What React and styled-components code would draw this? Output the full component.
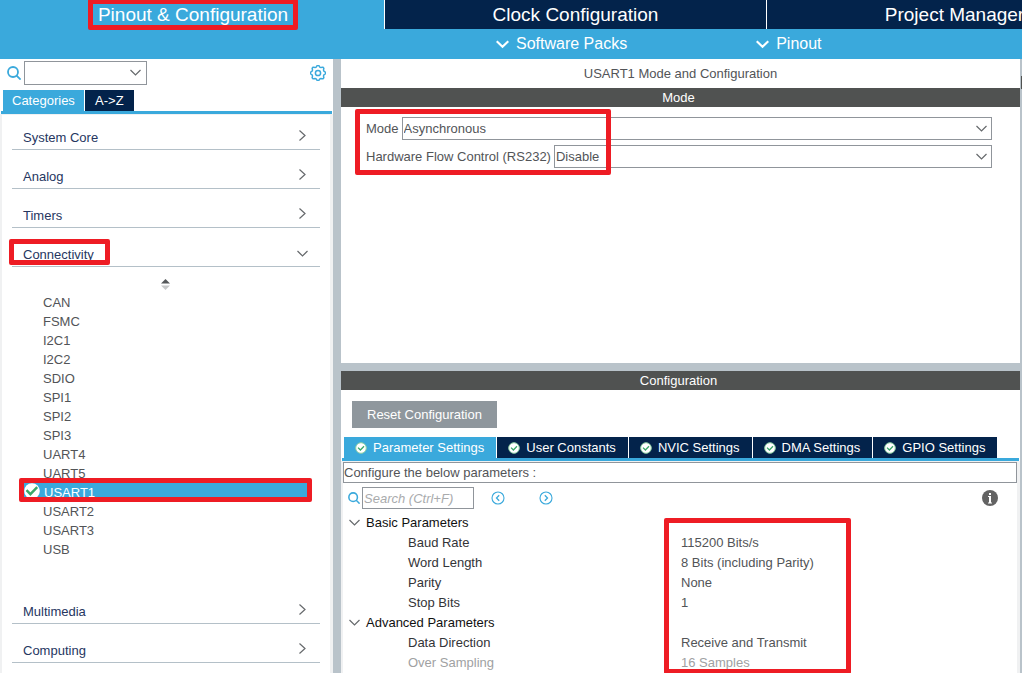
import React from "react";
import styled, { createGlobalStyle, css } from "styled-components";

const color = {
  sky: "#3aa9dc",
  navy: "#03234b",
  splitter: "#b9c3ca",
  bar: "#505251",
  line: "#b4c0c8",
  field: "#90959b",
  text: "#525457",
  category: "#26365f",
  edge: "#f0f1f2",
  mark: "#ee1c24",
};

const GlobalStyle = createGlobalStyle`
  *, *::before, *::after { box-sizing: border-box; }
  body {
    margin: 0;
    overflow: hidden;
    font-family: "Liberation Sans", Arial, sans-serif;
    font-size: 13px;
    color: ${color.text};
    background: #fff;
  }
  button, input, select { font: inherit; color: inherit; margin: 0; border-radius: 0; }
  button { border: 0; padding: 0; background: none; cursor: pointer; }
  ul { list-style: none; margin: 0; padding: 0; }
  svg { display: block; flex: none; }
`;

const Page = styled.div`
  display: flex;
  flex-direction: column;
  height: 100vh;
  overflow: hidden;
`;

/* Red annotation frame laid over the part it points out */
const Mark = styled.span`
  position: absolute;
  z-index: 2;
  border: 5px solid ${color.mark};
  border-radius: 2px;
  pointer-events: none;
  left: ${(p) => p.$x}px;
  top: ${(p) => p.$y}px;
  width: ${(p) => p.$w}px;
  height: ${(p) => p.$h}px;
`;

const Header = styled.header`
  flex: none;
  background: ${color.sky};
  color: #fff;
`;

const MainTabs = styled.nav`
  display: flex;
  position: relative;
  height: 29px;
  padding-left: 2px;
`;

const MainTab = styled.button`
  flex: 1 0 ${(p) => (p.$last ? 376 : 382)}px;
  font-size: 19px;
  line-height: 29px;
  ${(p) =>
    !p.$active &&
    css`
      background: ${color.navy};
      border-left: 1px solid #fff;
    `}
`;

const SubBar = styled.div`
  display: flex;
  align-items: center;
  gap: 129px;
  height: 30px;
  padding-left: 496px;
`;

const SubMenu = styled.button`
  display: flex;
  align-items: center;
  gap: 7px;
  font-size: 16px;
`;

const Body = styled.div`
  display: flex;
  flex: 1;
  min-height: 0;
`;

const Sidebar = styled.aside`
  display: flex;
  flex-direction: column;
  flex: none;
  width: 333px;
`;

const SearchRow = styled.div`
  display: flex;
  align-items: center;
  height: 27px;
  margin-bottom: 4px;
  padding: 0 7px;
  gap: 3px;
`;

const IconButton = styled.button`
  display: flex;
  margin-left: ${(p) => (p.$push ? "auto" : "0")};
`;

const SelectBox = styled.div`
  display: flex;
  align-items: center;
  position: relative;
  height: ${(p) => p.$height || 23}px;
  ${(p) => (p.$width ? `width: ${p.$width}px;` : "flex: 1;")}
  svg {
    position: absolute;
    right: ${(p) => p.$inset || 5}px;
    pointer-events: none;
  }
`;

const Select = styled.select`
  appearance: none;
  width: 100%;
  height: 100%;
  padding: 0 1px;
  border: 1px solid ${color.field};
  background: #fff;
`;

const SideTabs = styled.div`
  display: flex;
  gap: 1px;
  padding-left: 3px;
`;

const SideTab = styled.button`
  height: 21px;
  min-width: 49px;
  padding: 0 9px;
  color: #fff;
  background: ${(p) => (p.$active ? color.sky : color.navy)};
`;

const Rule = styled.div`
  flex: none;
  height: 3px;
  margin: 0 ${(p) => p.$inset || 1}px;
  background: ${color.sky};
`;

const Categories = styled.div`
  display: flex;
  flex: 1;
  flex-direction: column;
  gap: 15px;
  padding: 11px 10px 0;
  border: solid ${color.edge};
  border-width: 1px 3px 0 2px;
`;

const CategoryRow = styled.button`
  display: flex;
  flex: none;
  justify-content: space-between;
  position: relative;
  width: 100%;
  height: 24px;
  padding: 0 12px 0 11px;
  border-bottom: 1px solid ${color.line};
  color: ${color.category};
  line-height: 24px;
`;

const Group = styled.section`
  flex: none;
`;

const Sorter = styled.button`
  display: flex;
  justify-content: center;
  width: 100%;
  height: 26px;
  padding: 12px 1px 0 0;
`;

const Peripherals = styled.ul`
  position: relative;
  padding-bottom: 26px !important;
`;

const Peripheral = styled.li`
  display: flex;
  align-items: flex-start;
  gap: 4px;
  height: 19px;
  margin: 0 12px;
  padding-left: ${(p) => (p.$active ? 0 : 19)}px;
  line-height: 19px;
  color: ${(p) => (p.$active ? "#fff" : color.text)};
  background: ${(p) => (p.$active ? color.sky : "transparent")};
`;

const Splitter = styled.div`
  flex: 0 0 8px;
  background: ${color.splitter};
`;

const Main = styled.main`
  display: flex;
  flex: 1;
  flex-direction: column;
  min-width: 0;
`;

const ScrollEdge = styled.div`
  display: flex;
  justify-content: flex-end;
  flex: 0 0 2px;
  padding-top: 17px;
  background: ${color.splitter};
`;

const ScrollThumb = styled.div`
  width: 1px;
  height: 13px;
  background: ${color.bar};
`;

const Title = styled.h1`
  margin: 0;
  text-align: center;
  font-size: 13px;
  font-weight: 400;
  line-height: 29px;
`;

const Bar = styled.h2`
  flex: none;
  margin: 0;
  padding-right: 4px;
  text-align: center;
  font-size: 13px;
  font-weight: 400;
  line-height: 19px;
  color: #fff;
  background: ${color.bar};
`;

const ModePanel = styled.section`
  flex: 0 0 304px;
`;

const ModeForm = styled.div`
  display: flex;
  flex-direction: column;
  gap: 5px;
  position: relative;
  padding: 10px 28px 0 25px;
`;

const Field = styled.div`
  display: flex;
  align-items: center;
  gap: 3px;
`;

const ConfigPanel = styled.section`
  display: flex;
  flex: 1;
  flex-direction: column;
  min-height: 0;
`;

const ResetButton = styled.button`
  align-self: flex-start;
  flex: none;
  height: 27px;
  margin: 11px 11px 9px;
  padding: 0 15px;
  color: #fff;
  background: #8f979d;
`;

const ConfigTabs = styled.div`
  display: flex;
  flex: none;
  gap: 1px;
  padding-left: 3px;
`;

const ConfigTab = styled.button`
  display: flex;
  align-items: center;
  gap: 6px;
  height: 21px;
  padding: 0 12px 0 11px;
  color: #fff;
  background: ${(p) => (p.$active ? color.sky : color.navy)};
`;

const Settings = styled.div`
  flex: 1;
  min-height: 0;
  border: solid ${color.edge};
  border-width: 1px 3px 0 2px;
`;

const Hint = styled.p`
  margin: 0;
  height: 21px;
  border: 1px solid ${color.field};
  line-height: 19px;
`;

const FindRow = styled.div`
  display: flex;
  align-items: center;
  height: 29px;
  padding: 4px 19px 3px 5px;
`;

const FindInput = styled.input`
  width: 112px;
  height: 22px;
  margin: 0 17px 0 2px;
  padding: 0 1px;
  border: 1px solid ${color.field};
  &::placeholder { color: #a9abad; font-style: italic; }
`;

const Steps = styled.div`
  display: flex;
  gap: 34px;
`;

const TableBox = styled.div`
  position: relative;
`;

const Table = styled.table`
  width: 100%;
  table-layout: fixed;
  border-collapse: collapse;
  th, td { height: 20px; padding: 0; line-height: 19px; text-align: left; font-weight: 400; }
`;

const NameCol = styled.col`
  width: 338px;
`;

const GroupToggle = styled.button`
  display: flex;
  align-items: center;
  gap: 6px;
  padding-left: 6px;
  color: #111;
`;

const ParamRow = styled.tr`
  color: ${(p) => (p.$off ? "#a0a1a2" : color.text)};
  && th { padding-left: 65px; color: ${(p) => (p.$off ? "#a0a1a2" : "#333437")}; }
`;

const chevronStroke = "#66696c";

const Chevron = ({ right }) => (
  <svg width="11" height={right ? 19 : 11} viewBox={right ? "0 -4 11 19" : "0 0 11 11"} fill="none" stroke={chevronStroke} strokeWidth="1.2">
    <path d={right ? "M2.5 0.5 8 5.5 2.5 10.5" : "M0.5 3 5.5 8 10.5 3"} />
  </svg>
);

const DownInRow = () => (
  <svg width="11" height="19" viewBox="0 0 11 19" fill="none" stroke={chevronStroke} strokeWidth="1.2">
    <path d="M0.5 8 5.5 13 10.5 8" />
  </svg>
);

const WhiteChevron = () => (
  <svg width="13" height="9" viewBox="0 0 13 9" fill="none" stroke="#fff" strokeWidth="2.2">
    <path d="M0.7 1.2 6.5 6.8 12.3 1.2" />
  </svg>
);

const Magnifier = ({ size }) => (
  <svg width={size} height={size} viewBox="0 0 14 14" fill="none" stroke={color.sky} strokeWidth="1.8">
    <circle cx="6" cy="6" r="5" />
    <path d="M9.6 9.6 13.6 13.6" />
  </svg>
);

const gearPath = Array.from({ length: 32 }, (_, i) => {
  const radius = i % 4 < 2 ? 7.6 : 6.2;
  const angle = ((i - 0.5) * Math.PI) / 16;
  return `${i ? "L" : "M"}${(8 + radius * Math.cos(angle)).toFixed(2)} ${(8 + radius * Math.sin(angle)).toFixed(2)}`;
}).join("");

const Gear = () => (
  <svg width="16" height="16" viewBox="0 0 16 16" fill="none" stroke={color.sky} strokeWidth="1.5" strokeLinejoin="round">
    <path d={gearPath + "Z"} />
    <circle cx="8" cy="8" r="2.6" />
  </svg>
);

const SortArrows = () => (
  <svg width="9" height="11" viewBox="0 0 9 11">
    <path d="M4.5 0 9 4.6H0Z" fill="#55585a" />
    <path d="M0 6.5H9L4.5 11Z" fill="#c6c8c9" />
  </svg>
);

const CheckBig = () => (
  <svg width="16" height="16" viewBox="0 0 16 16" fill="none">
    <circle cx="8" cy="8" r="7.8" fill="#fff" />
    <path d="M2.5 7.2 6.4 11.2 13.2 4.2" stroke="#3aa869" strokeWidth="2.4" />
  </svg>
);

const CheckSmall = () => (
  <svg width="12" height="12" viewBox="0 0 12 12" fill="none">
    <circle cx="6" cy="6" r="5.3" fill="#fff" stroke="#8fd0a4" />
    <path d="M3 5.6 5.4 8 9 4.2" stroke="#3aa869" strokeWidth="1.3" />
  </svg>
);

const CircleArrow = ({ next }) => (
  <svg width="14" height="14" viewBox="0 0 14 14" fill="none" stroke={color.sky}>
    <circle cx="7" cy="7" r="6" strokeWidth="1.1" />
    <path d={next ? "M5.8 4.2 8.5 7 5.8 9.8" : "M8.2 4.2 5.5 7 8.2 9.8"} strokeWidth="1.3" />
  </svg>
);

const Info = () => (
  <svg width="16" height="16" viewBox="0 0 16 16">
    <circle cx="8" cy="8" r="8" fill="#636363" />
    <path d="M7 3H9V5H7ZM6 6H9V12.4H10V13.4H6V12.4H7V7H6Z" fill="#fff" />
  </svg>
);

const peripherals = [
  "CAN", "FSMC", "I2C1", "I2C2", "SDIO", "SPI1", "SPI2", "SPI3",
  "UART4", "UART5", "USART1", "USART2", "USART3", "USB",
];

const groups = [
  {
    name: "Basic Parameters",
    rows: [
      ["Baud Rate", "115200 Bits/s"],
      ["Word Length", "8 Bits (including Parity)"],
      ["Parity", "None"],
      ["Stop Bits", "1"],
    ],
  },
  {
    name: "Advanced Parameters",
    rows: [
      ["Data Direction", "Receive and Transmit"],
      ["Over Sampling", "16 Samples", true],
    ],
  },
];

const configTabs = ["Parameter Settings", "User Constants", "NVIC Settings", "DMA Settings", "GPIO Settings"];

const Category = ({ name }) => (
  <CategoryRow>
    {name}
    <Chevron right />
  </CategoryRow>
);

export default function App() {
  return (
    <Page>
      <GlobalStyle />
      <Header>
        <MainTabs>
          <MainTab $active>Pinout &amp; Configuration</MainTab>
          <MainTab>Clock Configuration</MainTab>
          <MainTab $last>Project Manager</MainTab>
          <Mark $x={88} $y={-1} $w={210} $h={31} />
        </MainTabs>
        <SubBar>
          <SubMenu><WhiteChevron />Software Packs</SubMenu>
          <SubMenu><WhiteChevron />Pinout</SubMenu>
        </SubBar>
      </Header>
      <Body>
        <Sidebar>
          <SearchRow>
            <Magnifier size={14} />
            <SelectBox $width={123} $height={24} $inset={6}>
              <Select aria-label="Search peripherals" defaultValue="">
                <option value=""></option>
              </Select>
              <Chevron />
            </SelectBox>
            <IconButton $push aria-label="Settings"><Gear /></IconButton>
          </SearchRow>
          <SideTabs>
            <SideTab $active>Categories</SideTab>
            <SideTab>A-&gt;Z</SideTab>
          </SideTabs>
          <Rule />
          <Categories>
            <Category name="System Core" />
            <Category name="Analog" />
            <Category name="Timers" />
            <Group>
              <CategoryRow aria-expanded="true">
                Connectivity
                <DownInRow />
                <Mark $x={-3} $y={-4} $w={101} $h={26} />
              </CategoryRow>
              <Sorter aria-label="Sort"><SortArrows /></Sorter>
              <Peripherals>
                {peripherals.map((name) => (
                  <Peripheral key={name} $active={name === "USART1"}>
                    {name === "USART1" && <CheckBig />}
                    {name}
                  </Peripheral>
                ))}
                <Mark $x={7} $y={185} $w={293} $h={24} />
              </Peripherals>
            </Group>
            <Category name="Multimedia" />
            <Category name="Computing" />
          </Categories>
        </Sidebar>
        <Splitter />
        <Main>
          <ModePanel>
            <Title>USART1 Mode and Configuration</Title>
            <Bar>Mode</Bar>
            <ModeForm>
              <Field>
                <label htmlFor="mode">Mode</label>
                <SelectBox>
                  <Select id="mode"><option>Asynchronous</option></Select>
                  <Chevron />
                </SelectBox>
              </Field>
              <Field>
                <label htmlFor="flow">Hardware Flow Control (RS232)</label>
                <SelectBox>
                  <Select id="flow"><option>Disable</option></Select>
                  <Chevron />
                </SelectBox>
              </Field>
              <Mark $x={14} $y={2} $w={256} $h={66} />
            </ModeForm>
          </ModePanel>
          <Splitter />
          <ConfigPanel>
            <Bar>Configuration</Bar>
            <ResetButton>Reset Configuration</ResetButton>
            <ConfigTabs>
              {configTabs.map((name, i) => (
                <ConfigTab key={name} $active={i === 0}>
                  <CheckSmall />
                  {name}
                </ConfigTab>
              ))}
            </ConfigTabs>
            <Rule $inset={1} />
            <Settings>
              <Hint>Configure the below parameters :</Hint>
              <FindRow>
                <Magnifier size={12} />
                <FindInput aria-label="Search" placeholder="Search (Ctrl+F)" />
                <Steps>
                  <IconButton aria-label="Previous"><CircleArrow /></IconButton>
                  <IconButton aria-label="Next"><CircleArrow next /></IconButton>
                </Steps>
                <IconButton $push aria-label="Information"><Info /></IconButton>
              </FindRow>
              <TableBox>
                <Table>
                  <colgroup>
                    <NameCol />
                    <col />
                  </colgroup>
                  {groups.map((group) => (
                    <tbody key={group.name}>
                      <tr>
                        <th colSpan={2}>
                          <GroupToggle aria-expanded="true"><Chevron />{group.name}</GroupToggle>
                        </th>
                      </tr>
                      {group.rows.map(([name, value, off]) => (
                        <ParamRow key={name} $off={off}>
                          <th scope="row">{name}</th>
                          <td>{value}</td>
                        </ParamRow>
                      ))}
                    </tbody>
                  ))}
                </Table>
                <Mark $x={321} $y={6} $w={187} $h={156} />
              </TableBox>
            </Settings>
          </ConfigPanel>
        </Main>
        <ScrollEdge><ScrollThumb /></ScrollEdge>
      </Body>
    </Page>
  );
}
